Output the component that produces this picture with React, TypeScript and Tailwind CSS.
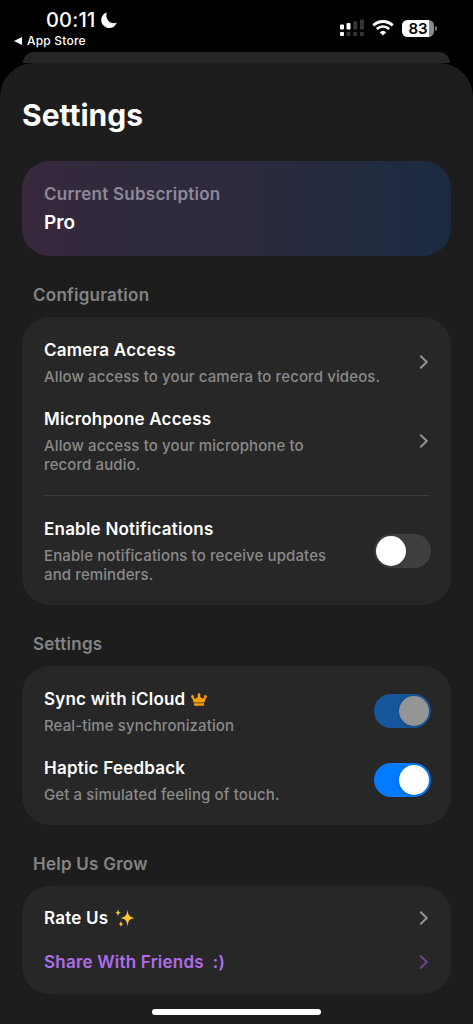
import type { ReactNode } from "react";

interface RowProps {
  title: ReactNode;
  description?: ReactNode;
  children: ReactNode;
}

function Row({ title, description, children }: RowProps) {
  return (
    <div className="flex items-center justify-between">
      <div>
        <h3 className="flex h-6 items-center whitespace-pre text-[17px] font-semibold leading-6 tracking-[0.22px] text-white">
          {title}
        </h3>
        {description && (
          <p className="mt-[5px] whitespace-nowrap text-[15px] font-medium leading-[19px] tracking-[0.11px] text-[#8a8a8a]">
            {description}
          </p>
        )}
      </div>
      {children}
    </div>
  );
}

function SectionLabel({ children }: { children: ReactNode }) {
  return (
    <h2 className="ml-[33px] h-6 text-[17px] font-semibold leading-6 tracking-[0.25px] text-[#848484]">
      {children}
    </h2>
  );
}

function Chevron({ className = "text-[#939393]" }: { className?: string }) {
  return (
    <svg className={`h-4 w-2.5 ${className}`} viewBox="0 0 10 16" fill="none" stroke="currentColor">
      <path d="M1.8 2.2 7.8 8l-6 5.8" strokeWidth="2" strokeLinecap="round" strokeLinejoin="round" />
    </svg>
  );
}

interface ToggleProps {
  on?: boolean;
  disabled?: boolean;
}

function Toggle({ on = false, disabled = false }: ToggleProps) {
  const track = on ? (disabled ? "bg-[#15569d]" : "bg-[#037bff]") : "bg-[#3f3f41]";
  return (
    <div
      role="switch"
      aria-checked={on}
      className={`-mr-0.5 flex h-[34px] w-[57px] items-center rounded-full p-0.5 ${on ? "justify-end" : "justify-start"} ${track}`}
    >
      <span className={`size-[30px] rounded-full shadow-[0_1px_4px_rgba(0,0,0,0.2)] ${disabled ? "bg-[#959595]" : "bg-white"}`} />
    </div>
  );
}

function StatusBar() {
  return (
    <header className="flex h-[52px] justify-between text-white">
      <div>
        <div className="ml-[46px] mt-[8px] flex h-6 items-center">
          <span className="text-[20px] font-medium leading-6 tracking-[0.2px]">00:11</span>
          <svg className="ml-[5px] size-4" viewBox="0 0 16 16" fill="currentColor">
            <path d="M5.8.4A8 8 0 1 0 15.8 10.6C10 13.200 3.600 7.400 5.800.4Z" />
          </svg>
        </div>
        <div className="ml-[14px] mt-px flex h-4 items-center">
          <svg className="h-2 w-2" viewBox="0 0 8 8" fill="currentColor">
            <path d="M0 4 8 0v8Z" />
          </svg>
          <span className="ml-[5px] text-xs font-medium leading-4 tracking-[0.2px]">App Store</span>
        </div>
      </div>
      <div className="mr-9 mt-[19px] flex h-[18px] items-center">
        <svg className="h-[18px] w-[25px]" viewBox="0 0 25 18">
          <g fill="#fff">
            <rect x="1" y="5.5" width="4" height="5" rx="1" />
            <rect x="7.5" y="4" width="4" height="6.5" rx="1" />
            <rect x="1" y="13" width="4" height="4" rx="1" />
          </g>
          <g fill="#363636">
            <rect x="14.2" y="2.3" width="4" height="8.2" rx="1" />
            <rect x="20.9" y=".5" width="4" height="10" rx="1" />
            <rect x="7.5" y="13" width="4" height="4" rx="1" />
            <rect x="14.2" y="13" width="4" height="4" rx="1" />
            <rect x="20.9" y="13" width="4" height="4" rx="1" />
          </g>
        </svg>
        <svg className="ml-2 h-4 w-[22px]" viewBox="0 0 22 16" fill="none" stroke="#fff">
          <path d="M1.3 5.4a14 14 0 0 1 19.4 0" strokeWidth="2.9" />
          <path d="M4.8 9a9 9 0 0 1 12.4 0" strokeWidth="2.7" />
          <path d="m11 15.6-3.3-3.4a4.8 4.8 0 0 1 6.6 0Z" fill="#fff" stroke="none" />
        </svg>
        <div className="ml-2 flex h-[17px] w-8 items-center overflow-hidden rounded-[5.5px] bg-[linear-gradient(90deg,#fff_83%,#8b8b8b_83%)]">
          <span className="w-full text-center text-[15px] font-semibold leading-[17px] text-black">83</span>
        </div>
        <span className="ml-px h-[5px] w-[2px] rounded-r-full bg-[#777]" />
      </div>
    </header>
  );
}

export default function App() {
  return (
    <div className="flex h-[1024px] w-[473px] flex-col overflow-hidden bg-black font-['Inter','Liberation_Sans',sans-serif]">
      <StatusBar />
      <div className="mx-[23px] h-[11px] shrink-0 rounded-t-[16px] bg-[#262626]" />
      <main className="flex flex-1 flex-col rounded-t-[34px] bg-[#1d1d1d]">
        <h1 className="ml-[22px] mt-8 h-10 text-[30px] font-bold leading-10 text-white">Settings</h1>

        <section className="mx-[22px] mt-[26px] h-[95px] rounded-[28px] bg-[linear-gradient(90deg,#38283c_0%,#302a3c_22%,#2d2a3f_50%,#252b3e_72%,#1b2a42_100%)] px-[22px] pt-[21px]">
          <p className="h-6 text-[17px] font-semibold leading-6 tracking-[0.25px] text-[#8e8998]">Current Subscription</p>
          <p className="mt-[5px] h-6 text-[19px] font-semibold leading-6 text-white">Pro</p>
        </section>

        <div className="mt-[27px]">
          <SectionLabel>Configuration</SectionLabel>
        </div>
        <section className="mx-[22px] mt-[10px] flex flex-col gap-[21px] rounded-[28px] bg-[#272727] px-[22px] pb-[21px] pt-[21px]">
          <Row title="Camera Access" description="Allow access to your camera to record videos.">
            <Chevron />
          </Row>
          <Row
            title="Microhpone Access"
            description={
              <>
                Allow access to your microphone to
                <br />
                record audio.
              </>
            }
          >
            <Chevron />
          </Row>
          <hr className="border-[#3d3d3d]" />
          <Row
            title="Enable Notifications"
            description={
              <>
                Enable notifications to receive updates
                <br />
                and reminders.
              </>
            }
          >
            <Toggle />
          </Row>
        </section>

        <div className="mt-[27px]">
          <SectionLabel>Settings</SectionLabel>
        </div>
        <section className="mx-[22px] mt-[10px] flex flex-col gap-[21px] rounded-[28px] bg-[#272727] px-[22px] pb-[21px] pt-[21px]">
          <Row
            title={
              <>
                Sync with iCloud
                <svg className="ml-1.5 h-[13px] w-4" viewBox="0 0 16 13" fill="#ff9f0a">
                  <path d="M2.6 9.4 1.2 4.9a1.4 1.4 0 1 1 1.3-.4c1 1.1 2.200 1.300 3.200.6.700-.6 1.200-1.500 1.400-2.300a1.400 1.400 0 1 1 1.800 0c.2.8.7 1.700 1.400 2.300 1 .7 2.200.5 3.200-.6a1.400 1.400 0 1 1 1.300.4l-1.400 4.500Z" />
                  <path d="M2.800 10.200h10.400l-.3 1.700q-.2.900-1.100.900H4.200q-.9 0-1.100-.9Z" />
                </svg>
              </>
            }
            description="Real-time synchronization"
          >
            <Toggle on disabled />
          </Row>
          <Row title="Haptic Feedback" description="Get a simulated feeling of touch.">
            <Toggle on />
          </Row>
        </section>

        <div className="mt-[27px]">
          <SectionLabel>Help Us Grow</SectionLabel>
        </div>
        <section className="mx-[22px] mt-[10px] flex flex-col gap-5 rounded-[28px] bg-[#272727] px-[22px] py-5">
          <Row
            title={
              <>
                Rate Us
                <svg className="ml-[7px] size-5" viewBox="0 0 20 20" fill="#fcc934">
                  <path d="M12.5 1c.5 5.8 1.600 8.200 7 9-5.400.8-6.500 3.200-7 9-.5-5.800-1.600-8.200-7-9 5.400-.8 6.500-3.200 7-9Z" />
                  <path d="M3 .8c.3 2.700.7 3.500 2.600 4-1.900.5-2.300 1.300-2.600 4-.3-2.700-.7-3.500-2.600-4C2.300 4.300 2.700 3.500 3 .8ZM6 12.500c.3 2.400.7 3.100 2.600 3.600-1.900.5-2.300 1.100-2.600 3.500-.3-2.400-.7-3-2.600-3.500 1.900-.5 2.300-1.200 2.600-3.600Z" />
                </svg>
              </>
            }
          >
            <Chevron />
          </Row>
          <Row title={<span className="text-[#b06ce8]">{"Share With Friends  :)"}</span>}>
            <Chevron className="text-[#6d4790]" />
          </Row>
        </section>

        <div className="mx-auto mt-auto mb-[9px] h-1.5 w-[169px] shrink-0 rounded-full bg-white" />
      </main>
    </div>
  );
}
